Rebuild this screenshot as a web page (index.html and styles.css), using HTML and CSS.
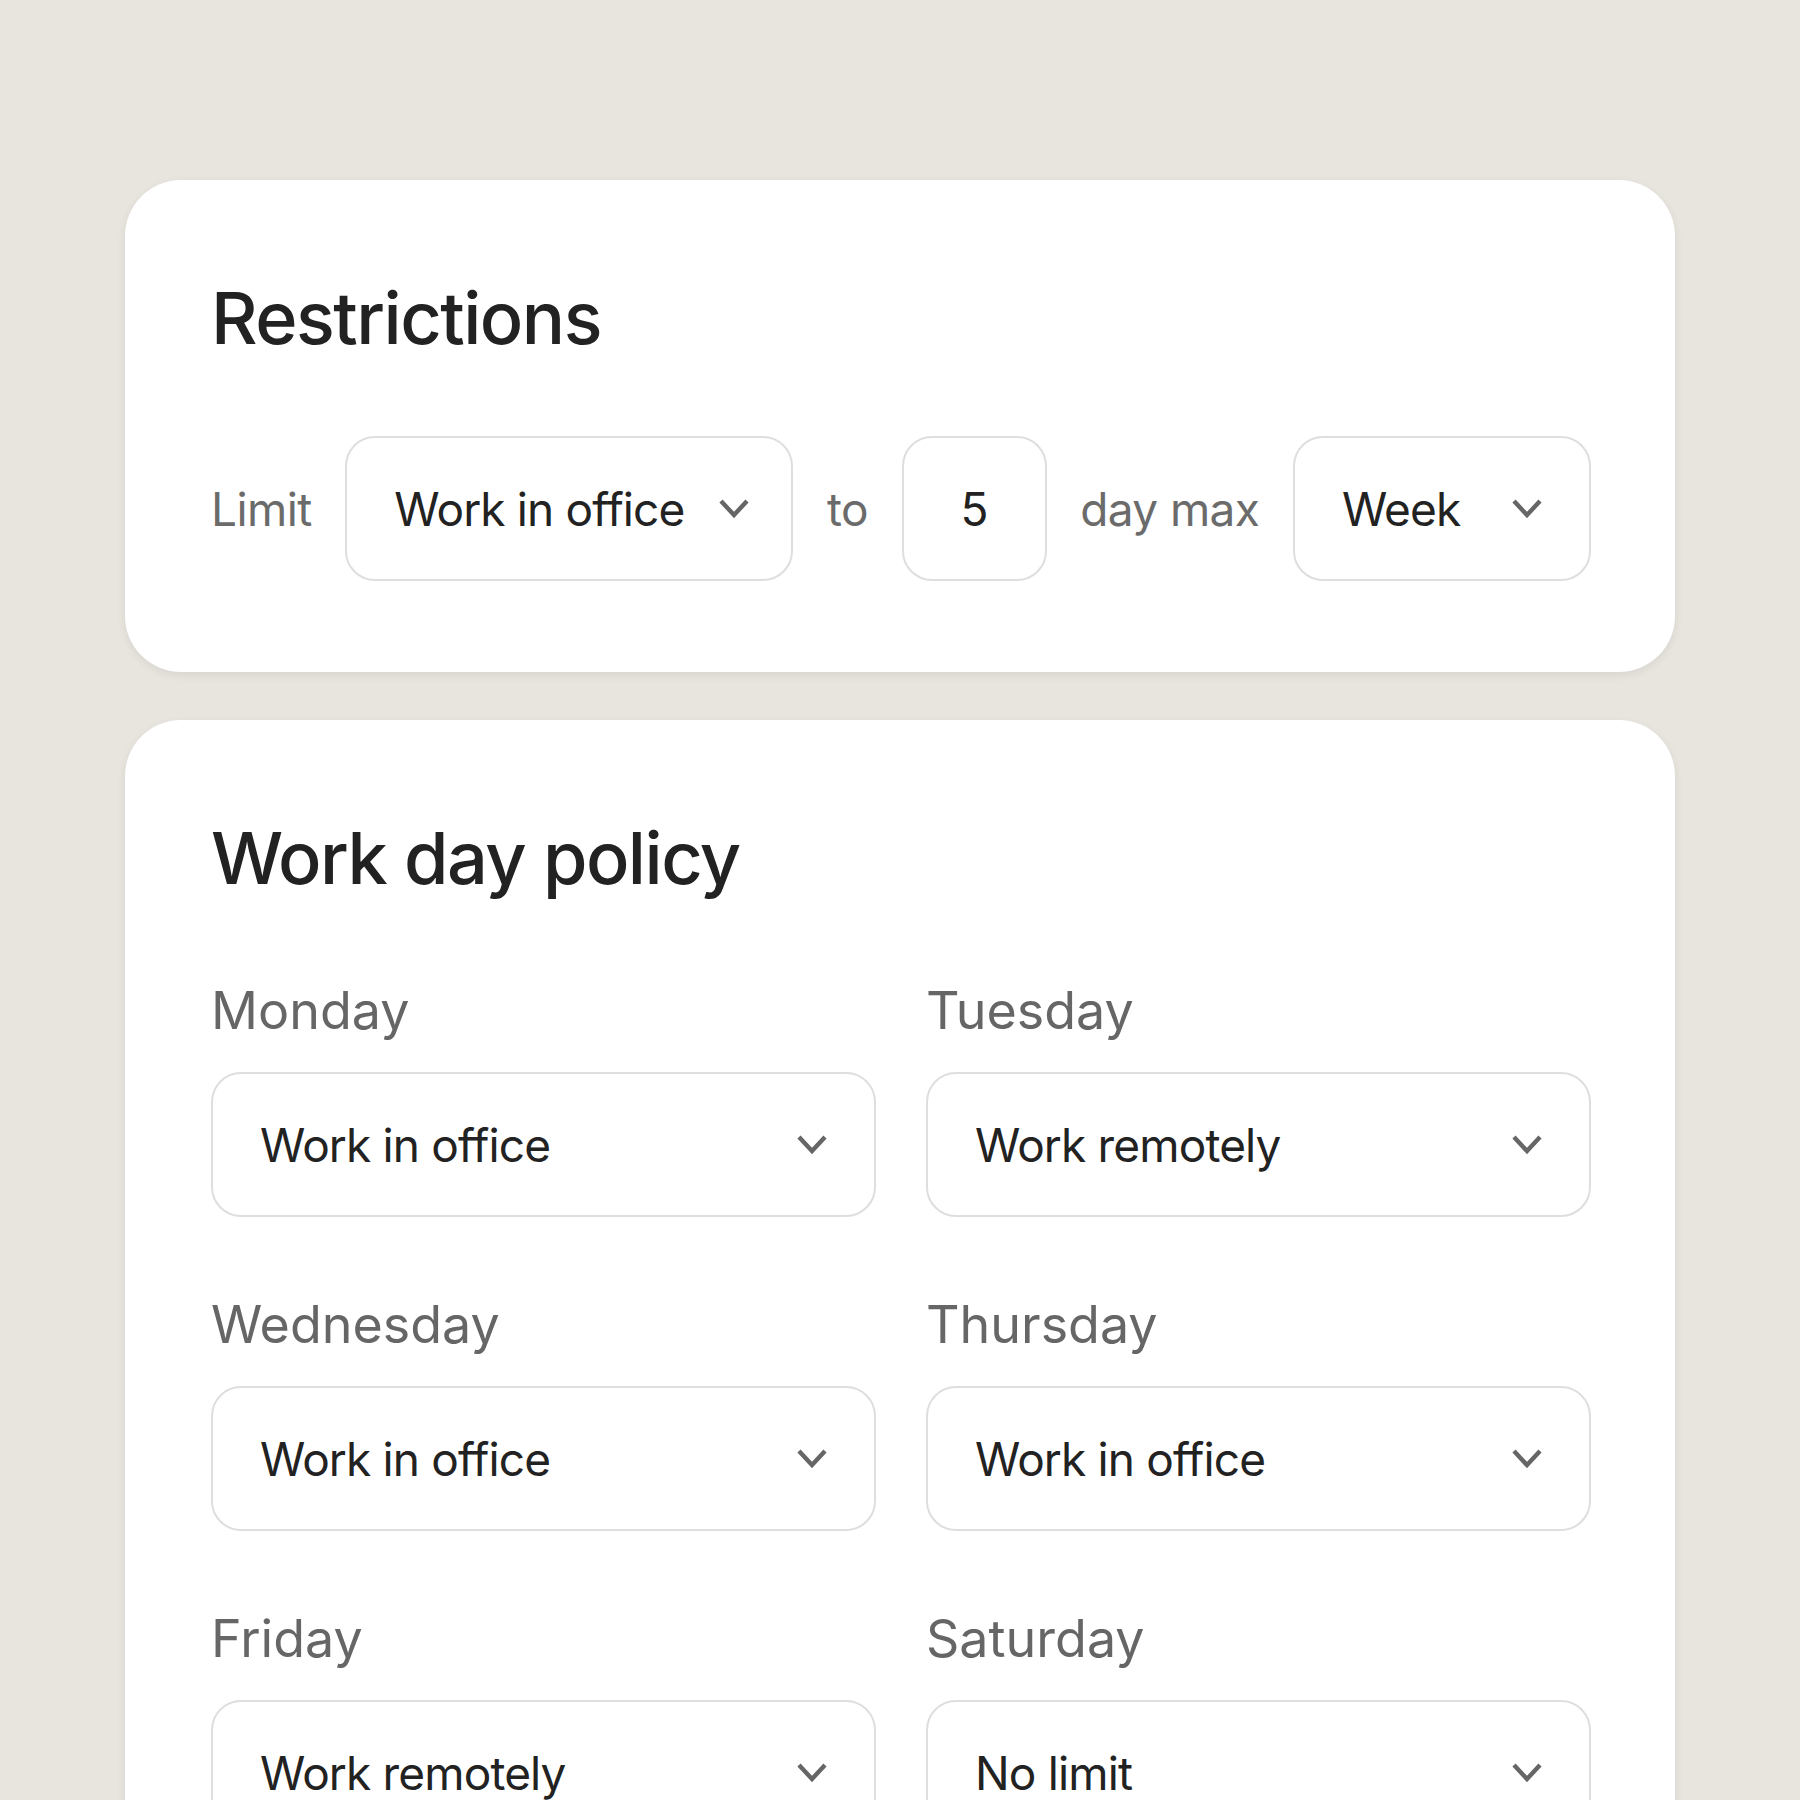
FILE: index.html
```html
<!DOCTYPE html>
<html lang="en">
<head>
<meta charset="utf-8">
<title>Restrictions</title>
<link rel="stylesheet" href="styles.css">
</head>
<body>
<div class="page">
  <section class="card">
    <h2 class="title">Restrictions</h2>
    <div class="limit-row">
      <span class="muted">Limit</span>
      <div class="box select limit-sel"><span>Work in office</span><svg class="chev" viewBox="0 0 30 19"><polyline points="2,2 15,16 28,2"/></svg></div>
      <span class="muted">to</span>
      <div class="box num"><span>5</span></div>
      <span class="muted">day max</span>
      <div class="box select week"><span>Week</span><svg class="chev" viewBox="0 0 30 19"><polyline points="2,2 15,16 28,2"/></svg></div>
    </div>
  </section>
  <section class="card">
    <h2 class="title title-days">Work day policy</h2>
    <div class="days">
      <div class="day">
        <div class="day-label">Monday</div>
        <div class="box select"><span>Work in office</span><svg class="chev" viewBox="0 0 30 19"><polyline points="2,2 15,16 28,2"/></svg></div>
      </div>
      <div class="day">
        <div class="day-label">Tuesday</div>
        <div class="box select"><span>Work remotely</span><svg class="chev" viewBox="0 0 30 19"><polyline points="2,2 15,16 28,2"/></svg></div>
      </div>
      <div class="day">
        <div class="day-label">Wednesday</div>
        <div class="box select"><span>Work in office</span><svg class="chev" viewBox="0 0 30 19"><polyline points="2,2 15,16 28,2"/></svg></div>
      </div>
      <div class="day">
        <div class="day-label">Thursday</div>
        <div class="box select"><span>Work in office</span><svg class="chev" viewBox="0 0 30 19"><polyline points="2,2 15,16 28,2"/></svg></div>
      </div>
      <div class="day">
        <div class="day-label">Friday</div>
        <div class="box select"><span>Work remotely</span><svg class="chev" viewBox="0 0 30 19"><polyline points="2,2 15,16 28,2"/></svg></div>
      </div>
      <div class="day">
        <div class="day-label">Saturday</div>
        <div class="box select"><span>No limit</span><svg class="chev" viewBox="0 0 30 19"><polyline points="2,2 15,16 28,2"/></svg></div>
      </div>
      <div class="day">
        <div class="day-label">Sunday</div>
        <div class="box select"><span>No limit</span><svg class="chev" viewBox="0 0 30 19"><polyline points="2,2 15,16 28,2"/></svg></div>
      </div>
    </div>
  </section>
</div>
</body>
</html>
```

FILE: styles.css
```css
html, body {
  margin: 0;
  padding: 0;
}
body {
  background: #e8e5df;
  font-family: Inter, "Noto Sans", "Liberation Sans", sans-serif;
  color: #222;
}
.page {
  width: 1550px;
  margin: 0 auto;
  padding: 180px 0 120px;
  display: flex;
  flex-direction: column;
  gap: 48px;
}
.card {
  background: #fff;
  border-radius: 56px;
  padding: 102px 84px 91px 86px;
  box-shadow: 0 3px 10px rgba(0, 0, 0, 0.07);
}
.title {
  margin: 0 0 82px;
  font-size: 72px;
  line-height: 72px;
  font-weight: 500;
  letter-spacing: -1.5px;
  color: #222;
}
.title-days {
  margin-bottom: 91px;
}
.limit-row {
  display: flex;
  align-items: center;
  justify-content: space-between;
}
.muted {
  font-size: 46px;
  letter-spacing: -0.6px;
  color: #6b6b6b;
  white-space: nowrap;
}
.box {
  box-sizing: border-box;
  height: 145px;
  border: 2px solid #dedede;
  border-radius: 30px;
  display: flex;
  align-items: center;
  padding: 0 47px;
  font-size: 46px;
  letter-spacing: -0.85px;
  color: #222;
  white-space: nowrap;
}
.select {
  justify-content: space-between;
  gap: 34px;
}
.limit-sel {
  width: 448px;
}
.week {
  width: 298px;
}
.num {
  width: 145px;
  padding: 0;
  justify-content: center;
}
.chev {
  width: 30px;
  height: 19px;
  flex: none;
}
.chev polyline {
  fill: none;
  stroke: #666;
  stroke-width: 4.4;
  stroke-linecap: butt;
  stroke-linejoin: miter;
}
.days {
  display: grid;
  grid-template-columns: 1fr 1fr;
  column-gap: 50px;
  row-gap: 82px;
}
.day-label {
  font-size: 52px;
  line-height: 52px;
  color: #666;
  margin-bottom: 35px;
}
```
